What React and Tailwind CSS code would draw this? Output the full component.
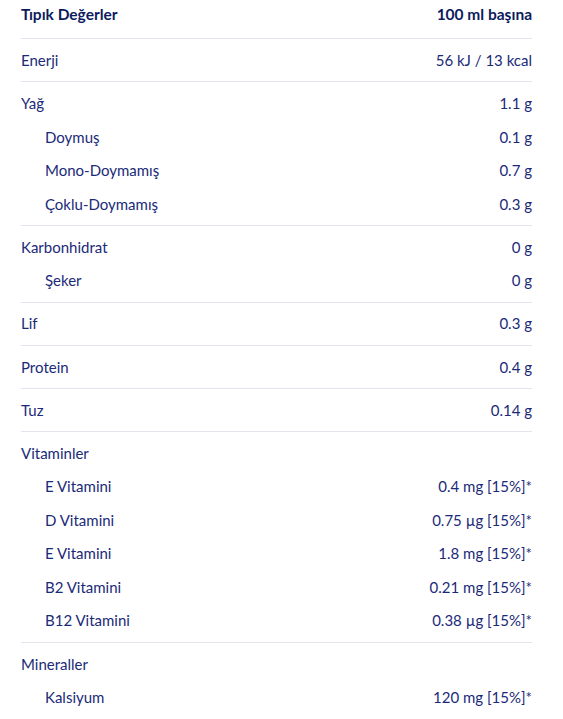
import React from "react";

const groups = [
  [["Enerji", "56 kJ / 13 kcal", false]],
  [
    ["Yağ", "1.1 g", false],
    ["Doymuş", "0.1 g", true],
    ["Mono-Doymamış", "0.7 g", true],
    ["Çoklu-Doymamış", "0.3 g", true],
  ],
  [
    ["Karbonhidrat", "0 g", false],
    ["Şeker", "0 g", true],
  ],
  [["Lif", "0.3 g", false]],
  [["Protein", "0.4 g", false]],
  [["Tuz", "0.14 g", false]],
  [
    ["Vitaminler", "", false],
    ["E Vitamini", "0.4 mg [15%]*", true],
    ["D Vitamini", "0.75 µg [15%]*", true],
    ["E Vitamini", "1.8 mg [15%]*", true],
    ["B2 Vitamini", "0.21 mg [15%]*", true],
    ["B12 Vitamini", "0.38 µg [15%]*", true],
  ],
  [
    ["Mineraller", "", false],
    ["Kalsiyum", "120 mg [15%]*", true],
  ],
];

export default function App() {
  return (
    <div className="w-[563px] h-[719px] overflow-hidden bg-white pl-[21px] pr-[31px] text-[#1b2a78] text-[15px]" style={{ fontFamily: "Lato, 'Noto Sans', sans-serif" }}>
      <div className="h-[38px] flex items-start pt-[3px] justify-between font-bold text-[15.5px] text-[#0d1b5e]">
        <span>Tıpık Değerler</span>
        <span>100 ml başına</span>
      </div>
      {groups.map((g, gi) => (
        <div key={gi} className="border-t border-[#e4e4f0] py-[4.35px]">
          {g.map(([label, value, sub], ri) => (
            <div key={ri} className="h-[33.5px] flex items-center justify-between">
              <span className={sub ? "pl-[24px]" : ""}>{label}</span>
              <span>{value}</span>
            </div>
          ))}
        </div>
      ))}
    </div>
  );
}
